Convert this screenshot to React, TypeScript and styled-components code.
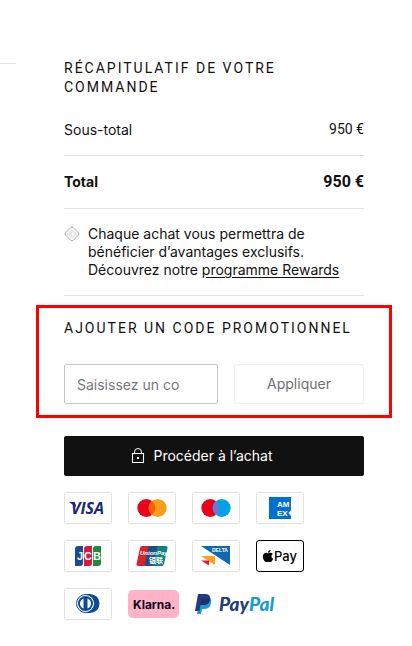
import React from "react";
import styled, { createGlobalStyle, css } from "styled-components";
import { FaApple } from "react-icons/fa";

const GlobalStyle = createGlobalStyle`
  *, *::before, *::after { box-sizing: border-box; }
  body {
    margin: 0;
    background: #fff;
    color: #111;
    font-family: Inter, "Liberation Sans", sans-serif;
    font-size: 14px;
    line-height: 18px;
  }
  button, input { font: inherit; }
`;

const Page = styled.div`
  display: grid;
  grid-template-columns: 16px minmax(0, 1fr);
  column-gap: 48px;
  padding: 0 48px 24px 0;
`;

const BagColumn = styled.div`
  padding-top: 63px;
`;

const Divider = styled.hr`
  margin: 0;
  border: 0;
  border-top: 1px solid #e1e1e1;
`;

const Summary = styled.main`
  padding-top: 59px;
`;

const Heading = styled.h2`
  margin: 0;
  font-family: Roboto, "Liberation Sans", sans-serif;
  font-size: 14px;
  font-weight: 400;
  line-height: 19px;
  letter-spacing: 2px;
  text-transform: uppercase;
`;

const Totals = styled.dl`
  margin: 7px 0 0;
`;

const TotalRow = styled.div<{ $strong?: boolean }>`
  display: flex;
  justify-content: space-between;
  align-items: center;
  padding: 16px 0;
  border-bottom: 1px solid #e1e1e1;
  line-height: 19px;
  ${(p) =>
    p.$strong &&
    css`
      font-weight: 700;
      line-height: 20px;
    `}
`;

const Label = styled.dt``;

const Amount = styled.dd<{ $large?: boolean }>`
  margin: 0;
  font-family: Roboto, "Liberation Sans", sans-serif;
  font-size: ${(p) => (p.$large ? 16 : 14)}px;
`;

const Rewards = styled.section`
  display: flex;
  gap: 8px;
  padding: 16px 0;
  border-bottom: 1px solid #e1e1e1;

  svg { flex: none; margin-top: 1px; }
  p { margin: 0; }
`;

const RewardsLink = styled.a`
  color: inherit;
  text-decoration: underline;
  text-underline-offset: 2px;
`;

const Promo = styled.section`
  position: relative;
  padding-top: 23px;

  &::after {
    content: "";
    position: absolute;
    inset: 9px -28px -14px;
    border: 3px solid #f00;
    pointer-events: none;
  }
`;

const PromoForm = styled.form`
  display: grid;
  grid-template-columns: minmax(0, 154fr) minmax(0, 130fr);
  gap: 16px;
  margin-top: 26px;
`;

const PromoInput = styled.input`
  width: 100%;
  height: 40px;
  padding: 0 12px;
  border: 1px solid #c8c8c8;
  border-radius: 2px;
  background: #fff;
  color: #111;

  &::placeholder { color: #777; opacity: 1; }
`;

const ApplyButton = styled.button`
  height: 40px;
  padding: 0;
  border: 1px solid #eee;
  border-radius: 2px;
  background: #fff;
  color: #707070;
`;

const CheckoutButton = styled.button`
  display: flex;
  justify-content: center;
  align-items: center;
  gap: 8px;
  width: 100%;
  height: 40px;
  margin-top: 32px;
  padding: 0 24px 0 0;
  border: 0;
  border-radius: 2px;
  background: #111;
  color: #fff;
`;

const PaymentList = styled.ul`
  display: grid;
  grid-template-columns: repeat(4, 48px);
  gap: 16px;
  margin: 16px 0 0;
  padding: 0;
  list-style: none;
`;

const PaymentCard = styled.li<{ $kind?: "apple" | "klarna" | "bare" }>`
  display: flex;
  justify-content: center;
  align-items: center;
  width: 48px;
  height: 32px;
  border: 1px solid #e1e1e1;
  border-radius: 2px;
  ${(p) =>
    p.$kind === "apple" &&
    css`
      border-color: #000;
      border-radius: 3px;
      color: #000;
    `}
  ${(p) =>
    p.$kind === "klarna" &&
    css`
      width: 51px;
      height: 28px;
      margin-top: 2px;
      border: 0;
      border-radius: 5px;
      background: #ffb3c7;
    `}
  ${(p) =>
    p.$kind === "bare" &&
    css`
      justify-content: flex-start;
      width: 86px;
      border: 0;
    `}
`;

const RewardsIcon = () => (
  <svg width="16" height="16" viewBox="0 0 16 16" aria-hidden="true">
    <path d="M6.8 1.6Q8 .6 9.2 1.6L14.4 6.8Q15.4 8 14.4 9.2L9.2 14.4Q8 15.4 6.8 14.4L1.6 9.2Q.6 8 1.6 6.8Z" fill="#fff" stroke="#aaa" />
    <path d="M7 3.4Q8 2.5 9 3.4L12.6 7Q13.5 8 12.6 9L9 12.6Q8 13.5 7 12.6L3.4 9Q2.5 8 3.4 7Z" fill="#e6e8e7" />
    <path d="M8 4.8L11 8L8 11.2Z" fill="#f2f3f2" />
  </svg>
);

const LockIcon = () => (
  <svg width="14" height="16" viewBox="0 0 14 16" fill="none" stroke="#fff" aria-hidden="true">
    <path d="M1.5 5.5H12.5V14.5H1.5Z" strokeWidth="1.1" />
    <path d="M3.5 5.5V4Q3.5 .5 7 .5Q10.5 .5 10.5 4V5.5" />
    <rect x="6" y="9" width="2" height="2" fill="#fff" stroke="none" />
  </svg>
);

const VisaLogo = () => (
  <svg width="46" height="30" viewBox="0 0 46 30" role="img" aria-label="Visa">
    <path d="M4 9H9L11 12L10 15Q8 11 4 9Z" fill="#172b75" />
    <text x="6" y="21" fill="#172b75" fontFamily="Open Sans, sans-serif" fontSize="16" fontWeight="700" fontStyle="italic">VISA</text>
  </svg>
);

const CirclesLogo = ({ name, left, right, middle }: { name: string; left: string; right: string; middle: string }) => (
  <svg width="30" height="18" viewBox="0 0 30 18" role="img" aria-label={name}>
    <circle cx="9.3" cy="9" r="9" fill={left} />
    <circle cx="20.7" cy="9" r="9" fill={right} />
    <path d="M15 2Q18.3 5 18.3 9Q18.3 13 15 16Q11.7 13 11.7 9Q11.7 5 15 2Z" fill={middle} />
  </svg>
);

const AmexLogo = () => (
  <svg width="22" height="22" viewBox="0 0 22 22" role="img" aria-label="American Express">
    <rect width="22" height="22" fill="#006fcf" />
    <text x="8" y="10" fill="#fff" fontFamily="Liberation Sans, sans-serif" fontSize="8" fontWeight="700">AM</text>
    <text x="8" y="19" fill="#fff" fontFamily="Liberation Sans, sans-serif" fontSize="8" fontWeight="700">EX</text>
    <path d="M19.5 16L22 13V19L19.5 16Z" fill="#fff" />
  </svg>
);

const JcbLogo = () => (
  <svg width="26" height="20" viewBox="0 0 26 20" role="img" aria-label="JCB">
    <path d="M3 0H8V17Q8 20 5 20H0V3Q0 0 3 0Z" fill="#1c4b91" />
    <path d="M12 0H17V17Q17 20 14 20H9V3Q9 0 12 0Z" fill="#d71941" />
    <path d="M21 0H26V17Q26 20 23 20H18V3Q18 0 21 0Z" fill="#1d8a42" />
    <g fill="#fff" fontFamily="Liberation Sans, sans-serif" fontSize="11" fontWeight="700">
      <text x="2" y="14">J</text>
      <text x="9" y="14">C</text>
      <text x="18" y="14">B</text>
    </g>
  </svg>
);

const UnionPayLogo = () => (
  <svg width="32" height="20" viewBox="0 0 32 20" role="img" aria-label="UnionPay">
    <path d="M6 0H15L11 20H2Q0 20 .5 18L4 2Q4.4 0 6 0Z" fill="#d8232e" />
    <path d="M14 0H24L20 20H10Q8.5 20 9 18L12 2Q12.5 0 14 0Z" fill="#1d4f7d" />
    <path d="M23 0H30Q32 0 31.5 2L28 18Q27.500 20 26 20H18Q17 20 17.5 18L21 2Q21.5 0 23 0Z" fill="#138083" />
    <text x="4" y="9" fill="#fff" fontFamily="Liberation Sans, sans-serif" fontSize="6" fontWeight="700" fontStyle="italic">UnionPay</text>
    <text x="13" y="17" fill="#fff" fontFamily="Noto Sans CJK SC, sans-serif" fontSize="7" fontWeight="700">银联</text>
  </svg>
);

const DeltaLogo = () => (
  <svg width="30" height="20" viewBox="0 0 30 20" role="img" aria-label="Delta">
    <path d="M0 0H29V19Z" fill="#1267b1" />
    <path d="M0 10H14V19Z" fill="#f9a11b" />
    <path d="M0 14.5H8V19.5Z" fill="#e51937" />
    <text x="11" y="6" fill="#fff" fontFamily="Liberation Sans, sans-serif" fontSize="5" fontWeight="700">DELTA</text>
  </svg>
);

const ApplePayLogo = () => (
  <svg width="38" height="20" viewBox="0 0 38 20" role="img" aria-label="Apple Pay">
    <FaApple x="0" y="3" width="14" height="13" />
    <text x="13" y="15" fontFamily="Inter, sans-serif" fontSize="13" fontWeight="500">Pay</text>
  </svg>
);

const DinersLogo = () => (
  <svg width="24" height="20" viewBox="0 0 24 20" role="img" aria-label="Diners Club">
    <path d="M9 0H14Q23 1 23.5 9Q23.5 18 14 19H9Z" fill="#0a4a97" />
    <circle cx="9.5" cy="9.5" r="9" fill="#fff" stroke="#0a4a97" />
    <circle cx="9.5" cy="9.5" r="7.5" fill="#0a4a97" />
    <path d="M7.5 4.5V14.5Q4 13 4 9.5Q4 6 7.5 4.5ZM11.5 4.5V14.5Q15 13 15 9.5Q15 6 11.5 4.5Z" fill="#fff" />
  </svg>
);

const KlarnaLogo = () => (
  <svg width="51" height="28" viewBox="0 0 51 28" role="img" aria-label="Klarna">
    <text x="5" y="19" fill="#0b051d" fontFamily="Inter, sans-serif" fontSize="12" fontWeight="700">Klarna.</text>
  </svg>
);

const PayPalLogo = () => (
  <svg width="86" height="32" viewBox="0 0 86 32" role="img" aria-label="PayPal">
    <path d="M8 9H17Q20 10 19 15Q18 21 12 21H10L9 26H5Z" fill="#179bd7" />
    <path d="M6 6H13Q19 6 18 11.5Q17 17 11 17H8.5L7.5 23H3Z" fill="#253b80" />
    <path d="M9.5 11H16Q18 10.5 18 12Q16.5 17 11 17H8.5Z" fill="#222d65" />
    <text x="27" y="23" fontFamily="Lato, sans-serif" fontSize="19" fontWeight="900" fontStyle="italic">
      <tspan fill="#253b80">Pay</tspan>
      <tspan fill="#179bd7">Pal</tspan>
    </text>
  </svg>
);

export default function App() {
  return (
    <>
      <GlobalStyle />
      <Page>
        <BagColumn>
          <Divider />
        </BagColumn>
        <Summary>
          <Heading>Récapitulatif de votre commande</Heading>
          <Totals>
            <TotalRow>
              <Label>Sous-total</Label>
              <Amount>950 €</Amount>
            </TotalRow>
            <TotalRow $strong>
              <Label>Total</Label>
              <Amount $large>950 €</Amount>
            </TotalRow>
          </Totals>
          <Rewards>
            <RewardsIcon />
            <p>
              <span>Chaque achat vous permettra de bénéficier d’avantages exclusifs. </span>
              <span>Découvrez notre </span>
              <RewardsLink href="#rewards">programme Rewards</RewardsLink>
            </p>
          </Rewards>
          <Promo>
            <Heading id="promo-title">Ajouter un code promotionnel</Heading>
            <PromoForm onSubmit={(e) => e.preventDefault()}>
              <PromoInput type="text" aria-labelledby="promo-title" placeholder="Saisissez un co" />
              <ApplyButton type="submit">Appliquer</ApplyButton>
            </PromoForm>
          </Promo>
          <CheckoutButton type="button">
            <LockIcon />
            Procéder à l’achat
          </CheckoutButton>
          <PaymentList>
            <PaymentCard><VisaLogo /></PaymentCard>
            <PaymentCard><CirclesLogo name="Mastercard" left="#eb001b" right="#f79e1b" middle="#ff5f00" /></PaymentCard>
            <PaymentCard><CirclesLogo name="Maestro" left="#eb001b" right="#00a2e5" middle="#7375cf" /></PaymentCard>
            <PaymentCard><AmexLogo /></PaymentCard>
            <PaymentCard><JcbLogo /></PaymentCard>
            <PaymentCard><UnionPayLogo /></PaymentCard>
            <PaymentCard><DeltaLogo /></PaymentCard>
            <PaymentCard $kind="apple"><ApplePayLogo /></PaymentCard>
            <PaymentCard><DinersLogo /></PaymentCard>
            <PaymentCard $kind="klarna"><KlarnaLogo /></PaymentCard>
            <PaymentCard $kind="bare"><PayPalLogo /></PaymentCard>
          </PaymentList>
        </Summary>
      </Page>
    </>
  );
}
